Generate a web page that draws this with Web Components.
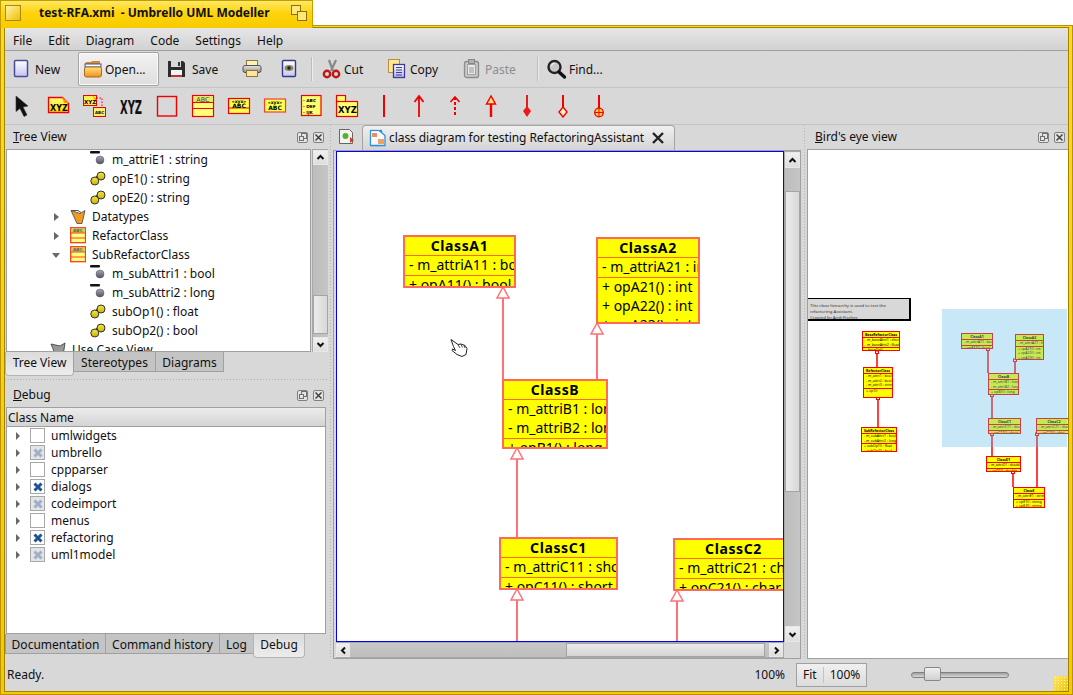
<!DOCTYPE html>
<html>
<head>
<meta charset="utf-8">
<title>Umbrello</title>
<style>
  html,body{margin:0;padding:0;background:#fff;width:1073px;height:695px;overflow:hidden}
  body{font:12px/16px "Noto Sans",sans-serif;color:#101010}
</style>
</head>
<body>
<uml-window caption="test-RFA.xmi  - Umbrello UML Modeller">
  <uml-menubar items="File,Edit,Diagram,Code,Settings,Help"></uml-menubar>
  <uml-toolbar>
    <uml-tool icon="new" label="New" w="70"></uml-tool>
    <uml-tool icon="open" label="Open..." w="81" active></uml-tool>
    <uml-tool icon="save" label="Save" w="73" style="margin-left:4px;gap:3px"></uml-tool>
    <uml-tool icon="print" w="36" style="margin-left:2px"></uml-tool>
    <uml-tool icon="view" w="29"></uml-tool>
    <uml-sep style="margin:0 5px 0 8px"></uml-sep>
    <uml-tool icon="cut" label="Cut" w="65"></uml-tool>
    <uml-tool icon="copy" label="Copy" w="76" style="gap:2px"></uml-tool>
    <uml-tool icon="paste" label="Paste" w="73" disabled></uml-tool>
    <uml-sep style="margin:0 4px 0 6px"></uml-sep>
    <uml-tool icon="find" label="Find..." w="70"></uml-tool>
  </uml-toolbar>
  <uml-palette icons="pointer,note,anchor,xyz,box,klass,iface,dtype,enum,pkg,line,arrow,dash,inherit,aggr,comp,contain"></uml-palette>
  <uml-workspace>
    <uml-dock slot="left" heading="Tree View" key="T" style="height:253px">
      <uml-pane>
        <uml-tree></uml-tree>
        <uml-scrollbar start="130" len="39" btn="15"></uml-scrollbar>
      </uml-pane>
      <uml-tabs items="Tree View:69,Stereotypes:83,Diagrams:69" active="0"></uml-tabs>
    </uml-dock>
    <uml-dock slot="left2" heading="Debug" key="D" style="height:276px">
      <uml-debug-list></uml-debug-list>
      <uml-tabs items="Documentation:101,Command history:115,Log:35,Debug:52" active="3"></uml-tabs>
    </uml-dock>
    <uml-diagram slot="center"></uml-diagram>
    <uml-dock slot="right" heading="Bird's eye view" key="B" style="height:534px;--head-right:3px">
      <uml-birdseye></uml-birdseye>
    </uml-dock>
  </uml-workspace>
  <uml-statusbar></uml-statusbar>
</uml-window>

<script>
const grad = (id, a, b) => `<defs><linearGradient id="${id}" x1="0" y1="0" x2="0" y2="1"><stop offset="0" stop-color="${a}"/><stop offset="1" stop-color="${b}"/></linearGradient></defs>`;
const lbl = (x, y, s, t, extra = "") => `<text x="${x}" y="${y}" font-size="${s}" font-weight="700" font-family="DejaVu Sans,sans-serif" fill="#000" ${extra}>${t}</text>`;
const RED = "#f00000";

const ICONS = {
  "new": [22, 24, grad("g", "#fff", "#c4c4f0") + `<rect x="2.5" y="3.5" width="13" height="16" rx="1" fill="url(#g)" stroke="#4a4a9e" stroke-width="1.5"/>`],
  open: [22, 24, grad("g", "#ffe47a", "#f09018") + `<path d="M3 7l1-2h5l1-1h8v4H3z" fill="#d88a28"/><rect x="3" y="7" width="16" height="3" fill="#fff" stroke="#4050a0"/><rect x="2.5" y="10" width="17" height="10" rx="2" fill="url(#g)" stroke="#a86a20"/>`],
  save: [22, 24, `<path d="M1 4h15l2 2v14H1z" fill="#2c2c2c"/><rect x="4" y="4" width="10" height="6" fill="#d8d8d8"/><rect x="11" y="5" width="2" height="4" fill="#333"/><rect x="4" y="13" width="11" height="7" fill="#f4f4f4"/><rect x="4" y="18" width="11" height="2" fill="#c83030"/>`],
  print: [22, 24, grad("g", "#e8e8e8", "#8c8c8c") + `<rect x="4.500" y="3.500" width="11" height="6" fill="#fff0c0" stroke="#907830"/><rect x="1" y="8.500" width="18" height="7" rx="2" fill="url(#g)" stroke="#505050"/><rect x="4.500" y="13.500" width="11" height="6" fill="#ffe4a0" stroke="#907830"/>`],
  view: [22, 24, grad("g", "#fff", "#c8c8e8") + `<rect x="4.5" y="3.5" width="13" height="16" rx="1" fill="url(#g)" stroke="#303890" stroke-width="1.4"/><ellipse cx="11" cy="11" rx="4.5" ry="3" fill="#8a8a60"/><circle cx="11" cy="11" r="1.7" fill="#202020"/>`],
  cut: [22, 24, `<path d="M8 3l4 11M15 3l-5 11" stroke="#888" stroke-width="2.2" fill="none"/><circle cx="6" cy="17" r="3.2" fill="none" stroke="#c01818" stroke-width="2.4"/><circle cx="15" cy="17" r="3.2" fill="none" stroke="#c01818" stroke-width="2.4"/>`],
  copy: [22, 24, grad("g", "#fff", "#b8b8e8") + `<rect x="2.5" y="2.5" width="11" height="13" fill="#ffe890" stroke="#b89040"/><rect x="7.5" y="7.5" width="11" height="13" fill="url(#g)" stroke="#3c3c98" stroke-width="1.3"/><path d="M10 10.5h6M10 13h6M10 15.500h6M10 18h6" stroke="#3c3c98"/>`],
  paste: [22, 24, `<rect x="2.5" y="4.500" width="14" height="16" rx="2" fill="#c8c8c8" stroke="#8c8c8c" stroke-width="1.3"/><rect x="5.500" y="7.500" width="8" height="10" fill="#e8e8e8" stroke="#a0a0a0"/><rect x="6.500" y="2.500" width="6" height="4" fill="#b0b0b0" stroke="#888"/><path d="M7 11h5M7 13h5M7 15h5" stroke="#999"/>`],
  find: [22, 24, `<circle cx="8.500" cy="10" r="6" fill="#c8c8c8" stroke="#222" stroke-width="2.400"/><path d="M13 15l5.500 5" stroke="#111" stroke-width="3.400" stroke-linecap="round"/><path d="M5.500 9a3.500 3.500 0 0 1 3-3" stroke="#fff" fill="none"/>`],
  pointer: [24, 24, `<path d="M5 2l12 10-5 1 4 8-3 1.500-4-8-4 3z" fill="#101010" stroke="#333" stroke-width=".6"/>`],
  note: [24, 24, grad("g", "#ffff80", "#ffe000") + `<path d="M1.500 3.500h14l6 6v9h-20z" fill="url(#g)" stroke="${RED}" stroke-width="1.300"/><path d="M15 3l2 6h5z" fill="#ff9800"/>` + lbl(3, 17, 8, "XYZ")],
  anchor: [24, 24, `<rect x=".5" y="1.500" width="13" height="10" fill="#ffee50" stroke="${RED}"/><path d="M9 1l3 5h2z" fill="#f80"/>` + lbl(1, 9.500, 5.500, "XYZ") + `<path d="M13.500 4h5.500v9" stroke="${RED}" stroke-dasharray="1.500 1.500" fill="none"/><rect x="10.500" y="13.500" width="12" height="9" fill="#ffee70" stroke="${RED}"/>` + lbl(12, 19.500, 4, "ABC")],
  xyz: [24, 24, `<text x="1" y="20" textLength="22" lengthAdjust="spacingAndGlyphs" font-size="20" font-weight="700" font-family="DejaVu Sans Condensed,DejaVu Sans,sans-serif" fill="#111">XYZ</text>`],
  box: [24, 24, `<rect x="2.500" y="2.500" width="19" height="19.500" fill="none" stroke="${RED}" stroke-width="1.400"/>`],
  klass: [24, 24, `<rect x="1.500" y="1.500" width="21" height="21" fill="#ffff78" stroke="${RED}" stroke-width="1.200"/><rect x="2" y="2" width="20" height="6" fill="#e8e868"/><path d="M1.500 8.500h21M1.500 14.500h21" stroke="${RED}" stroke-width="1.200"/><text x="12" y="7.500" text-anchor="middle" font-size="6.500" font-family="DejaVu Sans,sans-serif" fill="#444">ABC</text>`],
  iface: [24, 24, `<rect x="1.500" y="4.500" width="21" height="15" fill="#ffff50" stroke="${RED}" stroke-width="1.200"/><path d="M1.500 14h21" stroke="${RED}"/>` + lbl(12, 8.500, 4.500, "«xyx»", 'text-anchor="middle"') + lbl(12, 13.500, 6, "ABC", 'text-anchor="middle"')],
  dtype: [24, 24, `<rect x="1.500" y="5" width="21" height="13" fill="#ffff50" stroke="#f04030" stroke-width="1.200"/>` + lbl(12, 9.500, 4.500, "«xyx»", 'text-anchor="middle"') + lbl(12, 16, 6, "ABC", 'text-anchor="middle"')],
  "enum": [24, 24, `<rect x="2.500" y="1.500" width="19.500" height="20" fill="#ffff70" stroke="${RED}" stroke-width="1.200"/>` + lbl(4, 7.500, 4.300, "- ABC") + lbl(4, 13.500, 4.300, "- DEF") + lbl(4, 19.500, 4.300, "- IJK")],
  pkg: [24, 24, `<rect x="1.500" y="1.500" width="9" height="7" fill="#ffff70" stroke="${RED}" stroke-width="1.200"/><rect x="1.500" y="7.500" width="21" height="15" fill="#ffff70" stroke="${RED}" stroke-width="1.200"/>` + lbl(3, 19, 8.500, "XYZ")],
  line: [24, 24, `<path d="M13 1v22" stroke="${RED}" stroke-width="2"/>`],
  arrow: [24, 24, `<path d="M12 2v21M7.500 8l4.500-6 4.500 6" stroke="${RED}" stroke-width="1.800" fill="none"/>`],
  dash: [24, 24, `<path d="M12 3v20" stroke="${RED}" stroke-width="2" stroke-dasharray="3 2"/><path d="M7.500 8l4.500-5 4.500 5" stroke="${RED}" stroke-width="1.600" fill="none"/>`],
  inherit: [24, 24, `<path d="M12 9v14" stroke="${RED}" stroke-width="2.400"/><path d="M12 2l-4.500 8h9z" fill="#ffe070" stroke="${RED}" stroke-width="1.400"/>`],
  aggr: [24, 24, `<path d="M12 1v14" stroke="#e02020" stroke-width="2"/><path d="M12 12l4 5-4 6-4-6z" fill="#f01818"/>`],
  comp: [24, 24, `<path d="M12 1v13" stroke="${RED}" stroke-width="2"/><path d="M12 13l4 5-4 5-4-5z" fill="#fff8c0" stroke="${RED}" stroke-width="1.400"/>`],
  contain: [24, 24, `<path d="M12 1v13" stroke="${RED}" stroke-width="2"/><circle cx="12" cy="18.500" r="4.300" fill="#ffd040" stroke="${RED}" stroke-width="1.300"/><path d="M12 14v9M7.500 18.500h9" stroke="${RED}"/>`],
  attr: [16, 19, grad("g", "#a8a8b8", "#505060") + `<rect y="1" width="10" height="2.500" rx="1" fill="#111"/><circle cx="10" cy="10" r="4" fill="url(#g)" stroke="#555" stroke-width=".5"/>`],
  oper: [16, 19, grad("g", "#f4e840", "#c8b010") + `<path d="M6 10l5-4" stroke="#333" stroke-width="4"/><circle cx="4.800" cy="12" r="4" fill="url(#g)" stroke="#333"/><circle cx="11" cy="7" r="4" fill="url(#g)" stroke="#333"/>`],
  folder: [16, 19, `<path d="M1 3.500l9 3 5-3-3 13-5 0z" fill="#f09a20" stroke="#444" stroke-width=".8"/><path d="M1 3.500h7l3 2" fill="none" stroke="#555"/>`],
  grayfolder: [16, 19, `<path d="M1 4l9 2 5-3-2 13H6z" fill="#999" stroke="#333" stroke-width=".8"/>`],
  cls: [16, 19, `<rect x=".7" y="1.700" width="14.800" height="15" fill="#ffff80" stroke="#f84018" stroke-width="1.300"/><rect x="1.400" y="2.400" width="13.400" height="4.500" fill="#c8d050"/><path d="M.7 7h15M.7 12h15" stroke="#f84018"/><text x="8" y="6.300" text-anchor="middle" font-size="4.500" font-weight="700" font-family="DejaVu Sans,sans-serif" fill="#666">ABC</text>`],
  diag: [18, 18, `<rect x="1.500" y="1.500" width="11" height="15" fill="#fff" stroke="#3090d8" stroke-width="1.300"/><path d="M10 1.500l6 5v10h-14" fill="#f4f8ff" stroke="#3090d8" stroke-width="1.300"/><rect x="3" y="4" width="5" height="4" fill="#f08860"/><rect x="9" y="10" width="6" height="5" fill="#f0a060"/>`],
  tabnew: [18, 18, `<path d="M2.500 2.500h10l3 3v11h-13z" fill="#f4f4f4" stroke="#666"/><circle cx="8.500" cy="9" r="3" fill="#58b030"/><path d="M13 10l4 3-4 3z" fill="#d04020"/>`],
};

class UmlIcon extends HTMLElement {
  connectedCallback() {
    const [w, h, body] = ICONS[this.getAttribute("name")];
    this.attachShadow({ mode: "open" }).innerHTML = `
      <style>:host{display:block;flex:none;width:${w}px;height:${h}px}svg{display:block}</style>
      <svg width="${w}" height="${h}" viewBox="0 0 ${w} ${h}">${body}</svg>`;
  }
}
customElements.define("uml-icon", UmlIcon);

class UmlWindow extends HTMLElement {
  connectedCallback() {
    this.attachShadow({ mode: "open" }).innerHTML = `
      <style>
        :host{display:block;width:1073px;height:695px}
        .title{position:relative;z-index:1;box-sizing:border-box;width:313px;height:28px;margin-bottom:-3px;
          border:1px solid #c49e00;border-bottom:0;background:linear-gradient(#ffe866,#ffd30a 45%,#f8cb00);
          display:flex;align-items:center;padding:0 5px 3px 4px}
        .cap{font-weight:700;font-size:12px;margin-left:18px;flex:1;white-space:pre;color:#111}
        .sq{box-sizing:border-box;width:16px;height:16px;border:1px solid #a88a10;background:linear-gradient(135deg,#fff2a8,#f0c000)}
        .dbl{position:relative;width:16px;height:16px}
        .dbl i{position:absolute;box-sizing:border-box;width:10px;height:10px;border:1px solid #8a7010;background:#ffe878}
        .dbl i:first-child{left:0;top:0}.dbl i:last-child{left:6px;top:6px}
        .frame{box-sizing:border-box;height:670px;border:1px solid #b89400;background:linear-gradient(#ffd820,#f8c800);padding:1px 3px 2px 3px}
        .inner{box-sizing:border-box;height:100%;border:1px solid #a08400;background:#d8d8d8;position:relative;
          display:flex;flex-direction:column}
        .grip{position:absolute;right:0;bottom:0;width:14px;height:15px;
          background:radial-gradient(circle,#fff6b8 .7px,transparent 1px) 0 0/3px 3px,linear-gradient(135deg,#ffe66a,#f0c400)}
      </style>
      <div class="title">
        <div class="sq"></div><div class="cap">${this.getAttribute("caption")}</div>
        <div class="dbl"><i></i><i></i></div>
      </div>
      <div class="frame"><div class="inner"><slot></slot><div class="grip"></div></div></div>`;
  }
}
customElements.define("uml-window", UmlWindow);

class UmlMenubar extends HTMLElement {
  connectedCallback() {
    const items = this.getAttribute("items").split(",").map((m) => `<span>${m}</span>`).join("");
    this.attachShadow({ mode: "open" }).innerHTML = `
      <style>
        :host{display:flex;box-sizing:border-box;height:23px;flex:none;align-items:center;padding-top:3px;
          background:linear-gradient(#e6e6e6,#d2d2d2);border-bottom:1px solid #a0a0a0}
        span{padding:0 8px}
      </style>${items}`;
  }
}
customElements.define("uml-menubar", UmlMenubar);

class UmlToolbar extends HTMLElement {
  connectedCallback() {
    this.attachShadow({ mode: "open" }).innerHTML = `
      <style>
        :host{display:flex;box-sizing:border-box;height:37px;flex:none;align-items:center;padding-left:3px;
          border-bottom:1px solid #c4c4c4}
      </style><slot></slot>`;
  }
}
customElements.define("uml-toolbar", UmlToolbar);

class UmlTool extends HTMLElement {
  connectedCallback() {
    const label = this.getAttribute("label");
    this.attachShadow({ mode: "open" }).innerHTML = `
      <style>
        :host{display:flex;box-sizing:border-box;flex:none;width:${this.getAttribute("w")}px;height:34px;align-items:center;gap:1px;padding-left:4px}
        :host([active]){border:1px solid #a4a4a4;border-radius:2px;padding-left:3px;
          background:linear-gradient(#f2f2f2,#dedede);box-shadow:inset 0 0 0 1px #fafafa}
        :host([disabled]){color:#8e8e8e}
        span{padding-top:2px}
      </style>
      <uml-icon name="${this.getAttribute("icon")}"></uml-icon>${label ? `<span>${label}</span>` : ""}`;
  }
}
customElements.define("uml-tool", UmlTool);

class UmlSep extends HTMLElement {
  connectedCallback() {
    this.attachShadow({ mode: "open" }).innerHTML = `
      <style>:host{display:block;flex:none;width:1px;height:24px;background:#bcbcbc;box-shadow:1px 0 0 #ececec}</style>`;
  }
}
customElements.define("uml-sep", UmlSep);

class UmlPalette extends HTMLElement {
  connectedCallback() {
    const icons = this.getAttribute("icons").split(",").map((i) => `<div><uml-icon name="${i}"></uml-icon></div>`).join("");
    this.attachShadow({ mode: "open" }).innerHTML = `
      <style>
        :host{display:flex;box-sizing:border-box;height:37px;flex:none;border-bottom:1px solid #c4c4c4}
        div{width:36px;display:flex;align-items:center;justify-content:center}
      </style>${icons}`;
  }
}
customElements.define("uml-palette", UmlPalette);

class UmlWorkspace extends HTMLElement {
  connectedCallback() {
    const dots = "repeating-linear-gradient(#b4b4b4 0 1px,transparent 1px 3px)";
    this.attachShadow({ mode: "open" }).innerHTML = `
      <style>
        :host{display:grid;height:534px;flex:none;grid-template-columns:323px 5px 469px 5px 261px}
        .left{display:flex;flex-direction:column}
        .hsplit{height:5px;flex:none;background:repeating-linear-gradient(90deg,#b4b4b4 0 1px,transparent 1px 3px) 0 1px/100% 1px no-repeat}
        .vsplit{background:${dots} 2px 0/1px 100% no-repeat}
      </style>
      <div class="left"><slot name="left"></slot><div class="hsplit"></div><slot name="left2"></slot></div>
      <div class="vsplit"></div>
      <slot name="center"></slot>
      <div class="vsplit"></div>
      <slot name="right"></slot>`;
  }
}
customElements.define("uml-workspace", UmlWorkspace);

class UmlDock extends HTMLElement {
  connectedCallback() {
    const h = this.getAttribute("heading"), k = this.getAttribute("key");
    this.attachShadow({ mode: "open" }).innerHTML = `
      <style>
        :host{display:flex;flex-direction:column;box-sizing:border-box}
        .head{display:flex;align-items:center;height:24px;flex:none;padding:0 var(--head-right,4px) 0 8px}
        .t{flex:1}
        .b{box-sizing:border-box;width:11px;height:11px;border:1px solid #808080;border-radius:2px;margin-left:5px;position:relative;background:#e4e4e4}
        .r::before{content:"";position:absolute;left:3px;top:0;width:4px;height:4px;border:1px solid #707070}
        .r::after{content:"";position:absolute;left:1px;top:3px;width:3px;height:3px;border:1px solid #707070;background:#e4e4e4}
        .c svg{display:block}
        .body{flex:1;min-height:0;display:flex;flex-direction:column;padding-left:1px}
      </style>
      <div class="head"><div class="t"><u>${k}</u>${h.slice(1)}</div>
        <div class="b r"></div>
        <div class="b c"><svg width="9" height="9"><path d="M1.500 1.500l6 6M7.500 1.500l-6 6" stroke="#404040" stroke-width="1.500"/></svg></div>
      </div>
      <div class="body"><slot></slot></div>`;
  }
}
customElements.define("uml-dock", UmlDock);

class UmlPane extends HTMLElement {
  connectedCallback() {
    this.attachShadow({ mode: "open" }).innerHTML = `
      <style>:host{display:flex;height:203px;flex:none;gap:1px}</style><slot></slot>`;
  }
}
customElements.define("uml-pane", UmlPane);

class UmlScrollbar extends HTMLElement {
  connectedCallback() {
    const horiz = this.hasAttribute("horizontal");
    const btn = +this.getAttribute("btn") || 15;
    const arrow = (d) => `<svg width="9" height="9" viewBox="0 0 9 9"><path d="${d}" fill="none" stroke="#111" stroke-width="2"/></svg>`;
    const [a, b] = horiz ? ["M6 1.500L3 4.500l3 3", "M3 1.500l3 3-3 3"] : ["M1.500 6L4.500 3l3 3", "M1.500 3l3 3 3-3"];
    this.attachShadow({ mode: "open" }).innerHTML = `
      <style>
        :host{display:flex;flex:none;box-sizing:border-box;flex-direction:${horiz ? "row" : "column"};
          ${horiz ? "height:16px;padding:1px 1px 1px 0" : "width:16px;padding:1px 0 0 1px"};background:#a8a8a8}
        .btn{flex:none;${horiz ? `width:${btn}px` : `height:${btn}px`};background:linear-gradient(#f2f2f2,#dcdcdc);display:flex;align-items:center;justify-content:center;
          box-shadow:inset 0 0 0 1px #e8e8e8}
        .tr{background:linear-gradient(${horiz ? "#c8c8c8,#bebebe" : "90deg,#bcbcbc,#c6c6c6"})}
        .h{flex:none;box-sizing:border-box;border:1px solid #a4a4a4;background:linear-gradient(${horiz ? "#ececec,#d4d4d4" : "90deg,#ececec,#d8d8d8"})}
        .after{flex:1}
      </style>
      <div class="btn">${arrow(a)}</div>
      <div class="tr" style="flex:none;${horiz ? "width" : "height"}:${this.getAttribute("start")}px"></div>
      <div class="h" style="${horiz ? "width" : "height"}:${this.getAttribute("len")}px"></div>
      <div class="tr after"></div>
      <div class="btn">${arrow(b)}</div>`;
  }
}
customElements.define("uml-scrollbar", UmlScrollbar);

class UmlTree extends HTMLElement {
  connectedCallback() {
    const rows = [
      [3, "attr", "m_attriE1 : string"], [3, "oper", "opE1() : string"], [3, "oper", "opE2() : string"],
      [2, "folder", "Datatypes", "r"], [2, "cls", "RefactorClass", "r"], [2, "cls", "SubRefactorClass", "d"],
      [3, "attr", "m_subAttri1 : bool"], [3, "attr", "m_subAttri2 : long"], [3, "oper", "subOp1() : float"], [3, "oper", "subOp2() : bool"],
      [1, "grayfolder", "Use Case View"],
    ];
    const html = rows.map(([lv, ic, text, arrow]) => {
      const mark = arrow === "r" ? `<i class="ar"></i>` : arrow === "d" ? `<i class="ad"></i>` : "";
      return `<div class="row"><div class="ind" style="width:${lv * 20 + 23}px">${mark}</div><uml-icon name="${ic}"></uml-icon><span>${text}</span></div>`;
    }).join("");
    this.attachShadow({ mode: "open" }).innerHTML = `
      <style>
        :host{display:block;box-sizing:border-box;width:305px;height:203px;border:1px solid #a0a0a0;background:#fff;overflow:hidden}
        .row{display:flex;align-items:center;height:19px;white-space:nowrap}
        .row span{margin-left:6px}
        .ind{flex:none;display:flex;justify-content:flex-end;align-items:center;padding-right:10px;box-sizing:border-box}
        .ar{width:0;height:0;border-left:5px solid #686868;border-top:4px solid transparent;border-bottom:4px solid transparent;margin-right:1px}
        .ad{width:0;height:0;border-top:5px solid #686868;border-left:4px solid transparent;border-right:4px solid transparent;margin-bottom:-1px}
      </style>${html}`;
  }
}
customElements.define("uml-tree", UmlTree);

class UmlDebugList extends HTMLElement {
  connectedCallback() {
    const rows = [["umlwidgets", 0], ["umbrello", 1], ["cppparser", 0], ["dialogs", 2], ["codeimport", 1], ["menus", 0], ["refactoring", 2], ["uml1model", 1]];
    const x = (c) => `<svg width="12" height="12"><path d="M2.500 2.500l7 7M9.500 2.500l-7 7" stroke="${c}" stroke-width="3"/></svg>`;
    const html = rows.map(([n, s]) => `
      <div class="row"><i class="ar"></i>
        <div class="cb ${s === 1 ? "part" : ""}">${s === 1 ? x("#9cb0c8") : s === 2 ? x("#1c5296") : ""}</div>
        <span>${n}</span></div>`).join("");
    this.attachShadow({ mode: "open" }).innerHTML = `
      <style>
        :host{display:block;box-sizing:border-box;width:320px;height:227px;flex:none;border:1px solid #a0a0a0;background:#fff;overflow:hidden}
        .hd{height:19px;box-sizing:border-box;border-bottom:1px solid #a0a0a0;background:linear-gradient(#ececec,#d4d4d4);padding-left:1px;line-height:20px}
        .row{display:flex;align-items:center;height:17px;padding-left:9px}
        .ar{width:0;height:0;border-left:4px solid #686868;border-top:4px solid transparent;border-bottom:4px solid transparent;margin-right:10px}
        .cb{box-sizing:border-box;width:15px;height:15px;border:1px solid #a8a8a8;display:flex;align-items:center;justify-content:center;margin-right:6px}
        .part{background:#e4e4e4}
        svg{display:block}
      </style>
      <div class="hd">Class Name</div>${html}`;
  }
}
customElements.define("uml-debug-list", UmlDebugList);

class UmlTabs extends HTMLElement {
  connectedCallback() {
    const active = +this.getAttribute("active");
    const html = this.getAttribute("items").split(",").map((t, i) => {
      const [name, w] = t.split(":");
      return `<div class="tab ${i === active ? "on" : ""}" style="width:${w}px">${name}</div>`;
    }).join("");
    this.attachShadow({ mode: "open" }).innerHTML = `
      <style>
        :host{display:flex;align-items:flex-start;height:25px;flex:none;margin-top:0}
        .tab{box-sizing:border-box;height:20px;flex:none;text-align:center;line-height:21px;background:#c4c4c4;
          border:1px solid #a0a0a0;border-top:0;margin-left:-1px}
        .tab:first-child{margin-left:0}
        .tab.on{height:24px;background:linear-gradient(#dcdcdc,#ececec);border:1px solid #b4b4b4;border-top:0;border-radius:0 0 4px 4px;line-height:22px}
      </style>${html}`;
  }
}
customElements.define("uml-tabs", UmlTabs);

class UmlClass extends HTMLElement {
  connectedCallback() {
    const a = (n) => this.getAttribute(n);
    const list = (n) => (a(n) ? a(n).split("|") : []).map((t) => `<div class="r">${t}</div>`).join("");
    this.attachShadow({ mode: "open" }).innerHTML = `
      <style>
        :host{position:absolute;box-sizing:border-box;left:${a("x")}px;top:${a("y")}px;width:${a("w")}px;height:${a("h")}px;
          background:#ff0;border:var(--bw,2px) solid var(--line,#ff6a58);overflow:hidden;
          font-size:var(--fs,14px);line-height:var(--rl,18px);color:#000;white-space:nowrap}
        .n{height:var(--hh,18px);line-height:var(--hh,18px);font-weight:700;text-align:center;letter-spacing:var(--ls,.6px);border-bottom:1px solid var(--div,#ff6c10)}
        .s{border-bottom:1px solid var(--div,#ff6c10);padding-left:var(--pad,4px)}
        .s:last-child{border-bottom:0}
        .r{height:var(--rh,19px)}
      </style>
      <div class="n">${a("name")}</div>
      <div class="s">${list("attrs")}</div>
      <div class="s">${list("ops")}</div>`;
  }
}
customElements.define("uml-class", UmlClass);

class UmlDiagram extends HTMLElement {
  connectedCallback() {
    const inh = (x, y1, y2) => `<path d="M${x} ${y1 + 11}V${y2}" /><path d="M${x} ${y1}l-6 11h12z" fill="#fff" stroke-width="1.500"/>`;
    this.attachShadow({ mode: "open" }).innerHTML = `
      <style>
        :host{display:flex;flex-direction:column;margin-left:0}
        .bar{display:flex;align-items:flex-end;height:25px;flex:none;padding-left:4px}
        .nb{margin:0 7px 5px 0;flex:none}
        .tab{box-sizing:border-box;width:313px;height:25px;border:1px solid #a4a4a4;border-bottom:0;border-radius:4px 4px 0 0;
          background:linear-gradient(#f0f0f0,#d4d4d4);display:flex;align-items:center;padding-left:6px;gap:2px;white-space:nowrap}
        .tab span{flex:1;letter-spacing:-.07px}
        .tab svg{margin-right:9px}
        .frame{box-sizing:border-box;flex:none;width:468px;height:509px;border:1px solid #a0a0a0;padding-left:2px;
          display:grid;grid-template-columns:448px 16px;grid-template-rows:491px 16px}
        .canvas{position:relative;box-sizing:border-box;border:1px solid #00f;background:#fff;overflow:hidden}
        .lines{position:absolute;left:0;top:0}
        .hand{position:absolute;left:112px;top:186px}
      </style>
      <div class="bar">
        <uml-icon class="nb" name="tabnew"></uml-icon>
        <div class="tab"><uml-icon name="diag"></uml-icon><span>class diagram for testing RefactoringAssistant</span>
          <svg width="14" height="14"><path d="M2 2l10 10M12 2L2 12" stroke="#222" stroke-width="2.400"/></svg></div>
      </div>
      <div class="frame">
        <div class="canvas">
          <svg class="lines" width="446" height="489" fill="none" stroke="#ff7078" stroke-width="2">
            ${inh(166, 135, 228)}${inh(260, 171, 228)}${inh(180, 296, 386)}${inh(180, 437, 489)}${inh(340, 438, 489)}
          </svg>
          <uml-class x="66" y="83" w="113" h="53" name="ClassA1" attrs="- m_attriA11 : bool" ops="+ opA11() : bool"></uml-class>
          <uml-class x="259" y="85" w="104" h="87" name="ClassA2" attrs="- m_attriA21 : int" ops="+ opA21() : int|+ opA22() : int|+ opA23() : int"></uml-class>
          <uml-class x="165" y="227" w="106" h="70" name="ClassB" attrs="- m_attriB1 : long|- m_attriB2 : long" ops="+ opB1() : long"></uml-class>
          <uml-class x="162" y="385" w="119" h="53" name="ClassC1" attrs="- m_attriC11 : short" ops="+ opC11() : short"></uml-class>
          <uml-class x="336" y="386" w="121" h="53" name="ClassC2" attrs="- m_attriC21 : char" ops="+ opC21() : char"></uml-class>
          <svg class="hand" width="20" height="20" viewBox="0 0 20 20">
            <path d="M2 1.500l7 5 3-.5 4 1.500 2 3-1 6-4 2-5-2-5-4 .5-1.500 3 1.500-2-4z" fill="#fff" stroke="#222" stroke-width="1"/>
            <path d="M9 7l2 3M12 6.500l1.500 3M15 7.500l1 2.500" stroke="#222" stroke-width=".8"/>
          </svg>
        </div>
        <uml-scrollbar start="23" len="301" btn="16"></uml-scrollbar>
        <uml-scrollbar horizontal start="216" len="199" btn="14"></uml-scrollbar>
        <div></div>
      </div>`;
  }
}
customElements.define("uml-diagram", UmlDiagram);

class UmlBirdseye extends HTMLElement {
  connectedCallback() {
    const X = 808, Y = 150;
    const c = (name, x, y, w, h, attrs, ops) =>
      `<uml-class name="${name}" x="${x - X}" y="${y - Y}" w="${w}" h="${h}" attrs="${attrs}" ops="${ops}"></uml-class>`;
    const ln = (x, y1, y2) => `<path d="M${x - X} ${y1 - Y}V${y2 - Y}"/><rect x="${x - X - 1.500}" y="${y1 - Y}" width="3" height="2.500" fill="#fff" stroke-width="1"/>`;
    this.attachShadow({ mode: "open" }).innerHTML = `
      <style>
        :host{display:block;box-sizing:border-box;position:relative;margin-left:-1px;width:261px;height:510px;border:1px solid #a0a0a0;border-width:1px 0 1px 1px;
          background:#fff;overflow:hidden;--fs:3.500px;--rh:4.500px;--rl:4.500px;--hh:5px;--bw:1px;--line:#f00;--div:#f00;--pad:2px;--ls:0}
        .note{position:absolute;left:0;top:148px;box-sizing:border-box;width:103px;height:23px;background:#d8d8d8;
          border:1px solid #000;border-left:0;border-right-width:2px;border-bottom-width:2px;font-size:4.300px;line-height:6px;padding:3px 0 0 2px;color:#333;white-space:nowrap}
        svg{position:absolute;left:0;top:0}
        .over{position:absolute;left:134px;top:159px;width:125px;height:138px;background:rgba(94,188,235,.34)}
      </style>
      <div class="note">This class hierarchy is used to test the<br>refactoring Assistant.<br>Created by Andi Fischer.</div>
      <svg width="260" height="510" fill="none" stroke="#f00" stroke-width="1.500">
        ${ln(877, 351, 367)}${ln(878, 397, 427)}${ln(988, 348, 373)}${ln(1015, 359, 373)}
        ${ln(992, 394, 418)}${ln(992, 433, 456)}${ln(1013, 471, 487)}${ln(1037, 433, 487)}
      </svg>
      ${c("BaseRefactorClass", 862, 331, 38, 20, "- m_baseAttri1 : short|- m_baseAttri2 : float", "+ baseOp()")}
      ${c("RefactorClass", 863, 367, 30, 31, "- m_attri1 : bool|- m_attri2 : bool|- m_attri3 : string", "+ op1()")}
      ${c("SubRefactorClass", 861, 427, 36, 25, "- m_subAttri1 : bool|- m_subAttri2 : long", "+ subOp1() : float|+ subOp2() : bool")}
      ${c("ClassA1", 961, 333, 32, 16, "- m_attriA11 : bool", "+ opA11() : bool")}
      ${c("ClassA2", 1015, 334, 29, 26, "- m_attriA21 : int", "+ opA21() : int|+ opA22() : int|+ opA23() : int")}
      ${c("ClassB", 988, 373, 31, 22, "- m_attriB1 : long|- m_attriB2 : long", "+ opB1() : long")}
      ${c("ClassC1", 988, 418, 33, 16, "- m_attriC11 : short", "+ opC11() : short")}
      ${c("ClassC2", 1036, 418, 36, 16, "- m_attriC21 : char", "+ opC21() : char")}
      ${c("ClassD1", 986, 456, 35, 16, "- m_attriD1 : double", "+ opD1() : double")}
      ${c("ClassE", 1013, 487, 32, 21, "- m_attriE1 : string", "+ opE1() : string|+ opE2() : string")}
      <div class="over"></div>`;
  }
}
customElements.define("uml-birdseye", UmlBirdseye);

class UmlStatusbar extends HTMLElement {
  connectedCallback() {
    this.attachShadow({ mode: "open" }).innerHTML = `
      <style>
        :host{display:flex;align-items:center;height:32px;flex:none;padding:0 59px 0 2px}
        .ready{flex:1}
        .zoom{margin-right:11px}
        .grp{box-sizing:border-box;display:flex;align-items:center;width:71px;height:24px;border:1px solid #a0a0a0;
          background:linear-gradient(#f0f0f0,#dcdcdc);margin-right:44px;padding-left:6px}
        .grp b{font-weight:400}
        .grp i{width:1px;height:16px;background:#c4c4c4;margin:0 6px}
        .slider{position:relative;width:98px;height:6px;box-sizing:border-box;border:1px solid #808080;border-radius:3px;background:linear-gradient(#a0a0a0,#d8d8d8)}
        .slider i{position:absolute;left:12px;top:-6px;box-sizing:border-box;width:17px;height:14px;border:1px solid #888;border-radius:2px;background:linear-gradient(#f0f0f0,#d0d0d0)}
      </style>
      <div class="ready">Ready.</div>
      <div class="zoom">100%</div>
      <div class="grp"><b>Fit</b><i></i><b>100%</b></div>
      <div class="slider"><i></i></div>`;
  }
}
customElements.define("uml-statusbar", UmlStatusbar);
</script>
</body>
</html>
